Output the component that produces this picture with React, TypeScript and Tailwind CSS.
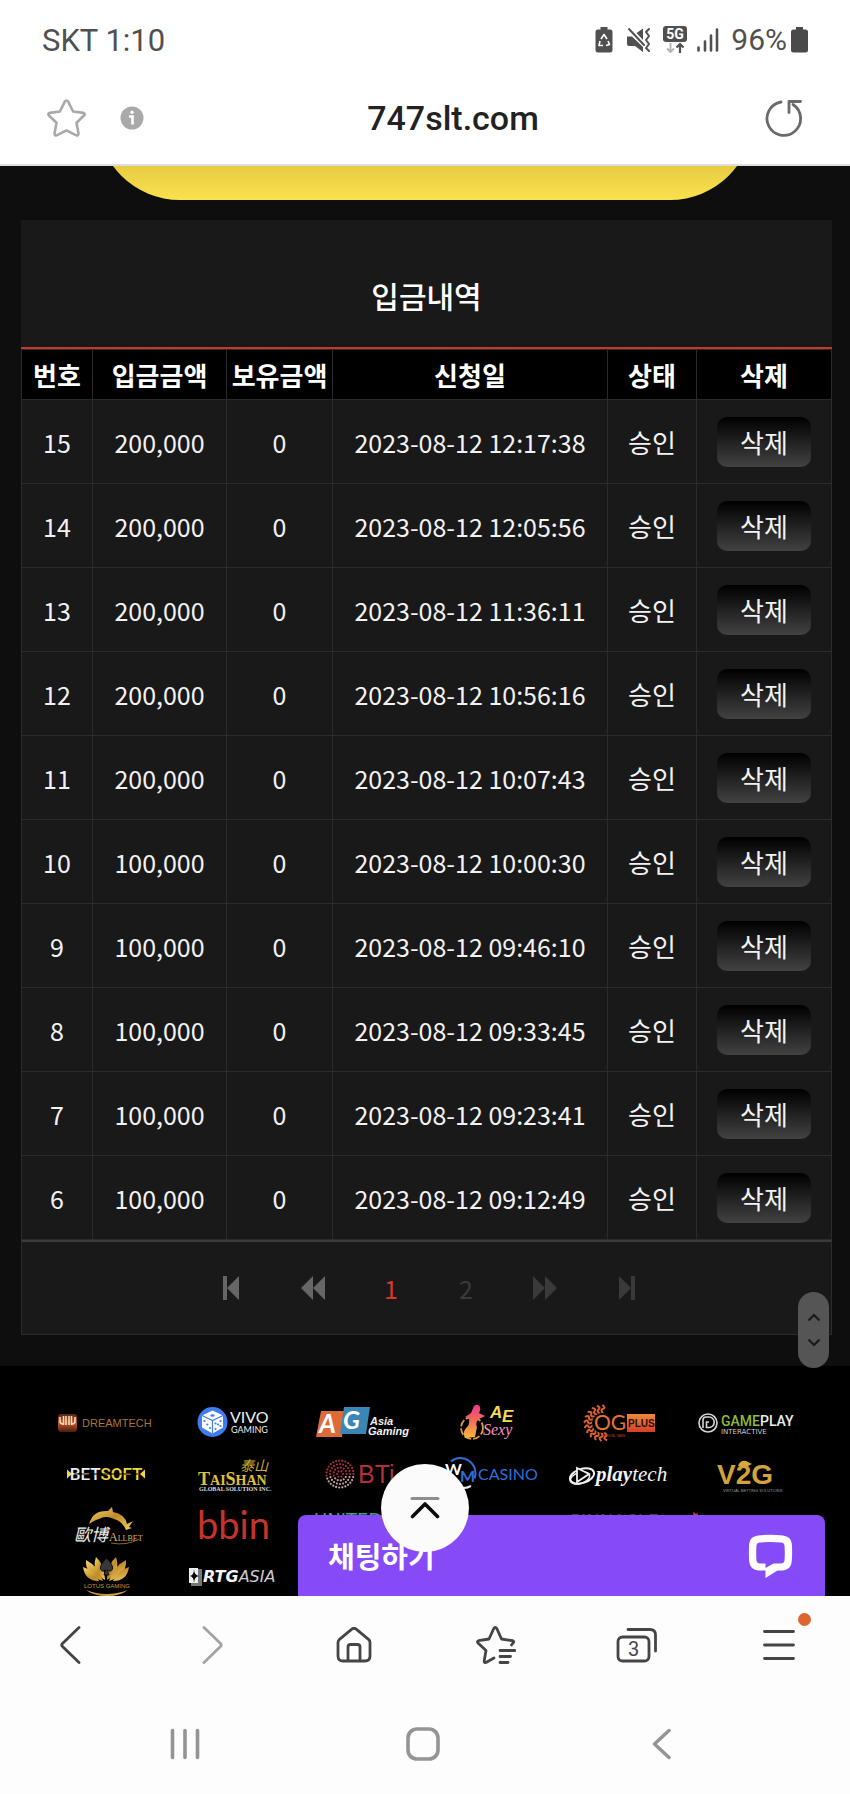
import React from "react";

type Deposito = {
  no: number;
  amount: string;
  balance: string;
  date: string;
};

const depositos: Deposito[] = [
  { no: 15, amount: "200,000", balance: "0", date: "2023-08-12 12:17:38" },
  { no: 14, amount: "200,000", balance: "0", date: "2023-08-12 12:05:56" },
  { no: 13, amount: "200,000", balance: "0", date: "2023-08-12 11:36:11" },
  { no: 12, amount: "200,000", balance: "0", date: "2023-08-12 10:56:16" },
  { no: 11, amount: "200,000", balance: "0", date: "2023-08-12 10:07:43" },
  { no: 10, amount: "100,000", balance: "0", date: "2023-08-12 10:00:30" },
  { no: 9, amount: "100,000", balance: "0", date: "2023-08-12 09:46:10" },
  { no: 8, amount: "100,000", balance: "0", date: "2023-08-12 09:33:45" },
  { no: 7, amount: "100,000", balance: "0", date: "2023-08-12 09:23:41" },
  { no: 6, amount: "100,000", balance: "0", date: "2023-08-12 09:12:49" },
];

const StatusBar: React.FC = () => (
  <div className="flex h-20 items-center justify-between px-[42px] text-[30px] leading-none text-[#505050]">
    <span className="text-[31px]">SKT 1:10</span>
    <div className="flex items-center">
      <svg width="18" height="26" viewBox="0 0 18 26" className="mr-3.5">
        <path d="M5.5 0h7v2.5H15a2.500 2.500 0 0 1 2.500 2.500v18a2.500 2.500 0 0 1-2.500 2.500H3A2.500 2.500 0 0 1 .5 23V5A2.500 2.500 0 0 1 3 2.500h2.500z" fill="#505050" />
        <path d="M6 12l3-4.500 3 4.500M13 14l1.500 3.500-3.500 1M8 18.500H4l1-4.500" fill="none" stroke="#fff" strokeWidth="1.600" strokeLinejoin="round" />
      </svg>
      <svg width="24" height="26" viewBox="0 0 24 26" className="mr-3">
        <path d="M0 9.500h5L16 20v5l-8-6H2a2 2 0 0 1-2-2zM9.500 6L16 1.500V13z" fill="#505050" />
        <path d="M2 2l15 16" stroke="#505050" strokeWidth="2" strokeLinecap="round" />
        <path d="M22 2l-3 3 3 4-3 4 3 4-3 4 3 3" fill="none" stroke="#505050" strokeWidth="2" strokeLinecap="round" strokeLinejoin="round" />
      </svg>
      <svg width="24" height="28" viewBox="0 0 24 28" className="mr-2.5">
        <rect width="24" height="16" rx="3" fill="#505050" />
        <text x="12" y="13" textAnchor="middle" fontSize="14" fontWeight="700" fill="#fff">5G</text>
        <path d="M7.500 17v9M4 22.500l3.500 3.500 3.500-3.500" fill="none" stroke="#b0b0b0" strokeWidth="1.800" />
        <path d="M17 27v-9M13.500 21.500L17 18l3.500 3.500" fill="none" stroke="#505050" strokeWidth="2.200" />
      </svg>
      <svg width="22" height="24" viewBox="0 0 22 24" className="mr-3">
        <path d="M1.500 19.500v3M8 13.500v9M14 7.500v15M20 1.500v21" stroke="#505050" strokeWidth="2.600" strokeLinecap="round" />
      </svg>
      <span>96%</span>
      <svg width="17" height="26" viewBox="0 0 17 26" className="ml-1">
        <path d="M5 0h7v2.500h2.500A2.500 2.500 0 0 1 17 5v18a2.500 2.500 0 0 1-2.500 2.500h-12A2.500 2.500 0 0 1 0 23V5a2.500 2.500 0 0 1 2.500-2.500H5z" fill="#4a4a4a" />
      </svg>
    </div>
  </div>
);

const AddressBar: React.FC = () => (
  <div className="flex h-[76px] items-center justify-between pl-[47px] pr-11">
    <div className="flex items-center gap-[34px]">
      <button type="button" aria-label="즐겨찾기">
        <svg width="39" height="39" viewBox="0 0 39 39" fill="none" stroke="#a9a9a9" strokeWidth="2.600" strokeLinejoin="round">
          <path d="M17.700 2.800q1.800-2.600 3.600 0l4.800 9.700 10.300 1.400q2 .8.900 2.300l-7.800 7.500 2 10.900q-.2 2.200-2.200 1.700l-9.800-5-9.800 5q-2 .5-2.200-1.700l2-10.900L1.700 16.200q-1.100-1.500.9-2.300l10.300-1.400z" />
        </svg>
      </button>
      <button type="button" aria-label="사이트 정보">
        <svg width="24" height="24" viewBox="0 0 24 24">
          <circle cx="12" cy="12" r="11.500" fill="#a9a9a9" />
          <circle cx="12" cy="6.200" r="1.700" fill="#fff" />
          <path d="M9 10.500h3.500v8" fill="none" stroke="#fff" strokeWidth="2.600" />
        </svg>
      </button>
    </div>
    <span className="text-[34px] font-medium leading-none text-[#222]">747slt.com</span>
    <button type="button" aria-label="새로고침" className="flex w-11 justify-center">
      <svg width="38" height="38" viewBox="0 0 38 38" fill="none" stroke="#6a6a6a" strokeWidth="2.800" strokeLinecap="round" strokeLinejoin="round">
        <path d="M16 3A16.800 16.800 0 1 0 28 5.500" />
        <path d="M35.500 2.500H24v11" />
      </svg>
    </button>
  </div>
);

const DepositTable: React.FC = () => (
  <table className="w-full table-fixed border-collapse text-center text-[25px] leading-8 text-[#f2f2f2]">
    <thead>
      <tr className="h-[50px] bg-black text-[26px] font-bold text-white">
        <th className="w-[71px] border border-[#2b2b2b]">번호</th>
        <th className="w-[134px] border border-[#2b2b2b]">입금금액</th>
        <th className="w-[106px] whitespace-nowrap border border-[#2b2b2b]">보유금액</th>
        <th className="border border-[#2b2b2b]">신청일</th>
        <th className="w-[89px] border border-[#2b2b2b]">상태</th>
        <th className="w-[135px] border border-[#2b2b2b]">삭제</th>
      </tr>
    </thead>
    <tbody>
      {depositos.map((item) => (
        <tr key={item.no} className="h-[84px]">
          <td className="border border-[#2b2b2b]">{item.no}</td>
          <td className="border border-[#2b2b2b]">{item.amount}</td>
          <td className="border border-[#2b2b2b]">{item.balance}</td>
          <td className="whitespace-nowrap border border-[#2b2b2b]">{item.date}</td>
          <td className="border border-[#2b2b2b] text-[26px]">승인</td>
          <td className="border border-[#2b2b2b] text-[26px]">
            <button
              type="button"
              className="h-[50px] w-[94px] rounded-[10px] bg-linear-to-b/srgb from-black to-[#424242] align-middle"
            >
              삭제
            </button>
          </td>
        </tr>
      ))}
    </tbody>
  </table>
);

const Pagination: React.FC = () => (
  <nav className="flex h-[95px] items-center justify-center border border-t-2 border-[#2b2b2b] border-t-[#3a3b3d] pl-1 text-[25px] leading-none">
    <button type="button" aria-label="처음" className="flex w-[82px] justify-center">
      <svg width="16" height="24" viewBox="0 0 16 24" fill="#666">
        <path d="M0 0h4v24H0zM16 0v24L4 12z" />
      </svg>
    </button>
    <button type="button" aria-label="이전" className="flex w-[82px] justify-center">
      <svg width="24" height="24" viewBox="0 0 24 24" fill="#666">
        <path d="M12 0v24L0 12zM24 0v24L12 12z" />
      </svg>
    </button>
    <button type="button" className="w-[75px] text-[#d33a2f]">1</button>
    <button type="button" className="w-[75px] text-[#3a3a3a]">2</button>
    <button type="button" aria-label="다음" className="flex w-[82px] justify-center">
      <svg width="24" height="24" viewBox="0 0 24 24" fill="#3a3a3a">
        <path d="M0 0v24l12-12zM12 0v24l12-12z" />
      </svg>
    </button>
    <button type="button" aria-label="마지막" className="flex w-[82px] justify-center">
      <svg width="16" height="24" viewBox="0 0 16 24" fill="#3a3a3a">
        <path d="M12 0h4v24h-4zM0 0v24l12-12z" />
      </svg>
    </button>
  </nav>
);

const Logo: React.FC<{ children?: React.ReactNode }> = ({ children }) => (
  <svg viewBox="0 0 128 51" className="w-full overflow-visible">
    {children}
  </svg>
);

// dot rings for the BTi mark: radius and number of dots
const rings = [
  [3, 6],
  [6.5, 13],
  [10, 20],
  [13.5, 27],
];

const rays = [80, 98, 116, 134, 152, 170, 188, 206, 224, 242, 260, 278];

const Partners: React.FC = () => (
  <footer className="bg-black px-[41px] pt-[31px]">
    <svg width="0" height="0" className="absolute">
      <defs>
        <linearGradient id="gold" x1="0" y1="0" x2="1" y2="1">
          <stop offset="0" stopColor="#f3d768" />
          <stop offset="0.500" stopColor="#c08a2a" />
          <stop offset="1" stopColor="#f0cf60" />
        </linearGradient>
        <linearGradient id="copper" x1="0" y1="0" x2="0" y2="1">
          <stop offset="0" stopColor="#5a2412" />
          <stop offset="0.500" stopColor="#c4562a" />
          <stop offset="1" stopColor="#4a1c10" />
        </linearGradient>
        <linearGradient id="sunset" x1="0" y1="0" x2="0" y2="1">
          <stop offset="0" stopColor="#f0358f" />
          <stop offset="0.450" stopColor="#f46a5a" />
          <stop offset="1" stopColor="#f6b93c" />
        </linearGradient>
        <linearGradient id="ember" x1="0" y1="0" x2="0" y2="1">
          <stop offset="0" stopColor="#ee8a35" />
          <stop offset="1" stopColor="#d4402c" />
        </linearGradient>
      </defs>
    </svg>
    <div className="grid grid-cols-6">
      <Logo>
        <rect x="17" y="17" width="19" height="18" rx="3" fill="url(#copper)" />
        <path d="M19 20v4q0 3 3 3M22.500 19v9M25 19v9M28 19v9M30.500 19v9M34 20v4q0 3-3 3" fill="none" stroke="#fbe3c0" strokeWidth="1.500" />
        <text x="41" y="30" fontFamily="Liberation Sans" fontSize="11" fill="#a8743c">DREAMTECH</text>
      </Logo>
      <Logo>
        <circle cx="43.500" cy="25" r="15" fill="#3f7cf0" />
        <path d="M43.500 13.500l10.500 5v12l-10.500 6-10.500-6v-12z" fill="#fff" />
        <path d="M33 18.500l10.500 5 10.500-5M43.500 23.500v13" fill="none" stroke="#3f7cf0" strokeWidth="1.200" />
        <g fill="#3f7cf0">
          <ellipse cx="43.500" cy="18.500" rx="2.200" ry="1.200" />
          <circle cx="35.500" cy="24" r="1.100" />
          <circle cx="38.300" cy="27.500" r="1.100" />
          <circle cx="41" cy="31" r="1.100" />
          <circle cx="46.500" cy="26.500" r="1.100" />
          <circle cx="51.500" cy="24" r="1.100" />
          <circle cx="49" cy="27.500" r="1.100" />
          <circle cx="46.500" cy="32" r="1.100" />
          <circle cx="51.500" cy="29" r="1.100" />
        </g>
        <text fontFamily="Lato" fontSize="16" fill="#eee">
          <tspan x="61" y="26">VIVO</tspan>
          <tspan x="62" y="36" fontSize="9">GAMING</tspan>
        </text>
      </Logo>
      <Logo>
        <path d="M24 14h24l-3 26H19z" fill="#de6a38" />
        <path d="M47 10h26l-4 27H43z" fill="#3a87b5" />
        <text x="22" y="36" fontFamily="Lato" fontSize="26" fontWeight="700" fontStyle="italic" fill="#fff">
          A<tspan x="46" y="32" fontSize="25">G</tspan>
        </text>
        <text fontFamily="Liberation Sans" fontSize="11" fontWeight="700" fontStyle="italic" fill="#f2f2f2">
          <tspan x="73" y="28">Asia</tspan>
          <tspan x="71" y="38">Gaming</tspan>
        </text>
      </Logo>
      <Logo>
        <circle cx="47" cy="31" r="11" fill="none" stroke="#dc9a35" strokeWidth="1.800" strokeDasharray="7 2" />
        <path d="M49 9q4-3 6 1 1 3-1 6l6 3-6 3q-4 3-2 8l-2 10-10 1q-3-7 2-11 3-3 2-8l-4-2 6-4z" fill="url(#sunset)" />
        <text fontFamily="Liberation Sans" fontSize="17" fontWeight="700" fontStyle="italic" fill="#f5da55">
          <tspan x="65" y="21">A</tspan>
          <tspan x="77" y="25">E</tspan>
          <tspan x="58" y="38" fontFamily="Liberation Serif" fontSize="16" fontWeight="400" fill="#f397c4">Sexy</tspan>
        </text>
      </Logo>
      <Logo>
        {rays.map((a) => (
          <path key={a} d="M58 26q4-4 5-1t4-1" transform={`rotate(${a} 49 26)`} fill="none" stroke="#dd6030" strokeWidth="2" />
        ))}
        <circle cx="49" cy="26" r="10" fill="#000" />
        <text x="41" y="33" fontFamily="Lato" fontSize="21" fill="#e8742f">OG</text>
        <rect x="74" y="17" width="28" height="18" fill="url(#ember)" />
        <text x="75" y="30" fontFamily="Liberation Sans" fontSize="10" fontWeight="700" fill="#2a0f08">PLUS</text>
        <text x="48" y="40" fontFamily="Liberation Sans" fontSize="3" fill="#c23a28">ORIENTAL GAME</text>
      </Logo>
      <Logo>
        <circle cx="27" cy="26" r="9" fill="none" stroke="#d6d6d6" strokeWidth="1.600" />
        <path d="M22 31v-8a3 3 0 0 1 3-3h3a5 5 0 0 1 0 10.500h-2.500V25h2.500" fill="none" stroke="#d6d6d6" strokeWidth="1.600" />
        <text x="40" y="29" fontFamily="Roboto" fontSize="14" fontWeight="500" fill="#8fb93a">
          GAME<tspan fill="#ececec">PLAY</tspan>
          <tspan x="40" y="37" fontFamily="DejaVu Sans" fontSize="7" fontWeight="400" fill="#ccc">INTERACTIVE</tspan>
        </text>
      </Logo>

      <Logo>
        <path d="M26 21.500l5 4.500-5 4.500zM104 21.500L99 26l5 4.500z" fill="#ecd93c" />
        <text x="65" y="32" textAnchor="middle" fontFamily="Roboto" fontSize="17" fontWeight="500" fill="#ececec">BET<tspan fill="#ecd93c">SOFT</tspan></text>
        <path d="M33 26h64" stroke="#000" strokeWidth="1" />
      </Logo>
      <Logo>
        <text x="29" y="37" fontFamily="Liberation Serif" fontSize="18" fontWeight="700" fill="#e0c23a">
          T<tspan fontSize="14">AI</tspan>S<tspan fontSize="14">HAN</tspan>
          <tspan x="71" y="23" fontFamily="Noto Sans CJK TC" fontSize="14" fontWeight="400" fontStyle="italic" fill="#cfae2e">泰山</tspan>
          <tspan x="30" y="43" fontSize="6" fill="#ddd">GLOBAL SOLUTION INC.</tspan>
        </text>
      </Logo>
      <Logo>
        {rings.map(([r, n]) =>
          Array.from({ length: n }, (_, i) => {
            const a = (i / n) * Math.PI * 2;
            const y = 26 + r * Math.sin(a);
            return (
              <circle key={`${r}-${i}`} cx={43 + r * Math.cos(a)} cy={y} r="1.100" fill={y > 29 ? "#c9a2a6" : "#a5303c"} />
            );
          })
        )}
        <text x="61" y="35" fontFamily="Liberation Sans" fontSize="25" fill="#b2303a">BTi</text>
      </Logo>
      <Logo>
        <path d="M26 13.500a15 15 0 0 1 23.500 17" fill="none" stroke="#2f70d8" strokeWidth="2" />
        <path d="M26 36q10 7 20 2" fill="none" stroke="#e8e8e8" strokeWidth="2" />
        <text x="20" y="27" fontFamily="Lato" fontSize="16" fontWeight="700" fill="#fff">
          W<tspan x="35" y="34" fill="#2f70d8">M</tspan>
          <tspan x="53" y="32" fontWeight="400" fill="#2f70d8">CASINO</tspan>
        </text>
      </Logo>
      <Logo>
        <ellipse cx="29" cy="28" rx="12.500" ry="7" transform="rotate(-18 29 28)" fill="none" stroke="#f0f0f0" strokeWidth="2" />
        <ellipse cx="27" cy="30" rx="10" ry="5.500" transform="rotate(-18 27 30)" fill="none" stroke="#f0f0f0" strokeWidth="1.500" />
        <path d="M24 20l12 6-12 8z" fill="#000" stroke="#f0f0f0" strokeWidth="1.800" />
        <text x="43" y="33" fontFamily="Liberation Serif" fontSize="21" fontStyle="italic" fontWeight="700" fill="#f4f4f4">
          play<tspan fontWeight="400">tech</tspan>
        </text>
      </Logo>
      <Logo>
        <text x="36" y="36" fontFamily="Liberation Sans" fontSize="28" fontWeight="700" fill="#d3a23a">
          V2G
          <tspan x="42" y="44" fontSize="4" fontWeight="400" fill="#999">VIRTUAL BETTING SOLUTIONS</tspan>
        </text>
        <path d="M57 18q2-6 8-5l6 3-4 2z" fill="#d9a83a" />
      </Logo>

      <Logo>
        <path d="M48 25q4-14 19-13l4-4 1 5q12 2 14 12l6-3-4 6 3 1-6 2q-4-9-12-11-8-4-15 0-4 1-10 5z" fill="url(#gold)" />
        <text x="33" y="42" fontFamily="Noto Sans CJK TC" fontSize="17" fontStyle="italic" fill="#eee">
          歐博
          <tspan x="68" y="42" fontFamily="Liberation Serif" fontSize="12" fontStyle="normal" fill="#d6b66a">A</tspan>
          <tspan fontFamily="Liberation Serif" fontSize="8" fontStyle="normal" fill="#d6b66a">LLBET</tspan>
        </text>
        <path d="M70 44q16 3 28-4" fill="none" stroke="#8a6a30" strokeWidth="1" />
      </Logo>
      <Logo>
        <text x="28" y="40" fontFamily="Lato" fontSize="38" fill="#c5332c">bbin</text>
      </Logo>
      <Logo>
        <text x="17" y="27" fontFamily="DejaVu Sans" fontSize="18" fill="#3fa08f">UNITED</text>
      </Logo>
      <Logo />
      <Logo>
        <text x="17" y="28" fontFamily="DejaVu Sans" fontSize="18" fill="#444">PINNACLE</text>
      </Logo>
      <Logo>
        <path d="M12 13l3 2 2-1-1 6h-3z" fill="#c5462c" />
      </Logo>

      <Logo>
        <g fill="url(#gold)">
          <path d="M64 30Q50 22 55 7q9 8 9 23z" />
          <path d="M66 30q14-8 9-23-9 8-9 23z" />
          <path d="M62 31Q44 26 45 10q12 6 17 21zM68 31q18-5 17-21-12 6-17 21z" />
          <path d="M58 31q-14 0-16-14 10 3 16 14zM72 31q14 0 16-14-10 3-16 14z" />
          <path d="M45 40q20 8 42 0-8 6-21 6t-21-6z" />
        </g>
        <path d="M65.500 8q7 7 6 11-2 4-5 1l1.500 5h-5l1.500-5q-3 3-5-1-1-4 6-11z" fill="#38383c" stroke="#000" strokeWidth="0.800" />
        <text x="43" y="38" fontFamily="Liberation Sans" fontSize="6" fill="#c99a3c">LOTUS GAMING</text>
      </Logo>
      <Logo>
        <rect x="22" y="19" width="11" height="17" fill="#777" />
        <rect x="20" y="18" width="9" height="15" fill="#eee" />
        <path d="M25 19q0 6 5 7-5 1-5 7 0-6-4-7 4-1 4-7z" fill="#000" />
        <text x="34" y="32" fontFamily="DejaVu Sans" fontSize="16" fontWeight="700" fontStyle="italic" fill="#f4f4f4">
          RTG<tspan fontWeight="400" fill="#ccc">ASIA</tspan>
        </text>
      </Logo>
    </div>
  </footer>
);

const Overlays: React.FC = () => (
  <>
    <div className="absolute bottom-[228px] right-[21px] flex h-[76px] w-[31px] flex-col items-center justify-center gap-4 rounded-full bg-[#555]">
      <svg width="14" height="9" viewBox="0 0 14 9" fill="none" stroke="#1a1a1a" strokeWidth="2.200">
        <path d="M1.500 7.500L7 2l5.500 5.500" />
      </svg>
      <svg width="14" height="9" viewBox="0 0 14 9" fill="none" stroke="#1a1a1a" strokeWidth="2.200">
        <path d="M1.500 1.500L7 7l5.500-5.500" />
      </svg>
    </div>
    <button
      type="button"
      className="absolute bottom-0 right-[25px] flex h-[81px] w-[62%] items-center justify-between rounded-t-lg bg-[#864bf6] pl-[30px] pr-8 text-[29px] font-bold text-white"
    >
      <span>채팅하기</span>
      <svg width="45" height="44" viewBox="0 0 45 44">
        <path
          fillRule="evenodd"
          d="M10 1.500q12.500-1.500 25 0 8 1 8.800 8 .7 9 0 18-.8 8-8.800 9h-5.500L17.500 44v-7.500H10q-8-1-8.800-9-.7-9 0-18 .8-7 8.800-8zM12 8.500q-3 0-3.500 3-.6 7.500 0 15 .5 3 3.500 3h5.500V34l8-4.500H33q3 0 3.500-3 .6-7.500 0-15-.5-3-3.500-3-10.500-1-21 0z"
          fill="#fff"
        />
      </svg>
    </button>
    <button
      type="button"
      aria-label="맨 위로"
      className="absolute bottom-11 left-1/2 flex size-[88px] -translate-x-1/2 items-center justify-center rounded-full bg-[#fbfbfb]"
    >
      <svg width="30" height="24" viewBox="0 0 30 24" fill="none" strokeLinecap="round" strokeLinejoin="round">
        <path d="M2 2.500h26" stroke="#8e8e8e" strokeWidth="3" />
        <path d="M2.500 20.500L15 8l12.500 12.500" stroke="#0a0a0a" strokeWidth="3.600" />
      </svg>
    </button>
  </>
);

const BrowserToolbar: React.FC = () => (
  <div className="grid h-[98px] grid-cols-6 place-items-center">
    <button type="button" aria-label="뒤로">
      <svg width="22" height="40" viewBox="0 0 22 40" fill="none" stroke="#444" strokeWidth="2.800" strokeLinecap="round" strokeLinejoin="round">
        <path d="M19 2.500L2.500 18.500q-1.500 1.500 0 3L19 37.500" />
      </svg>
    </button>
    <button type="button" aria-label="앞으로">
      <svg width="22" height="40" viewBox="0 0 22 40" fill="none" stroke="#a3a3a3" strokeWidth="2.800" strokeLinecap="round" strokeLinejoin="round">
        <path d="M3 2.500l16.500 16q1.500 1.500 0 3L3 37.500" />
      </svg>
    </button>
    <button type="button" aria-label="홈">
      <svg width="36" height="36" viewBox="0 0 36 36" fill="none" stroke="#454545" strokeWidth="2.800" strokeLinejoin="round">
        <path d="M2 15.500q0-2 1.500-3.200l12-10q2.500-1.800 5 0l12 10Q34 13.500 34 15.500V29q0 5-5 5H7q-5 0-5-5z" />
        <path d="M12 34V20q0-2.500 2.500-2.500h7Q24 17.500 24 20v14" />
      </svg>
    </button>
    <button type="button" aria-label="북마크">
      <svg width="40" height="40" viewBox="0 0 40 40" fill="none" stroke="#454545" strokeWidth="2.800" strokeLinecap="round" strokeLinejoin="round">
        <path d="M18 33l-8 4.500q-1.800.5-1.800-1.500L10 25.500 2 18q-1.200-1.500.6-2.300L13 14l4.800-10.500q1.500-2.300 3 0L25.500 14l11 1.700q2 .6.800 2L35.500 20" />
        <path d="M24 25.500h15M24 31.500h10.500M24 37.500h8" />
      </svg>
    </button>
    <button type="button" aria-label="탭">
      <svg width="42" height="36" viewBox="0 0 42 36" fill="none" stroke="#454545" strokeWidth="2.800" strokeLinecap="round">
        <rect x="2" y="10" width="31" height="24" rx="4.500" />
        <path d="M12 2.500h22q5.500 0 5.500 5.500v16" />
        <text x="17.500" y="29" textAnchor="middle" fontSize="20" fill="#454545" stroke="none">3</text>
      </svg>
    </button>
    <button type="button" aria-label="메뉴" className="relative">
      <svg width="32" height="32" viewBox="0 0 32 32" stroke="#454545" strokeWidth="2.800" strokeLinecap="round">
        <path d="M1.500 2.500h29M1.500 16h29M1.500 29.500h29" />
      </svg>
      <span className="absolute -right-4 -top-4 size-[13px] rounded-full bg-[#dc662f]" />
    </button>
  </div>
);

const SystemNav: React.FC = () => (
  <div className="grid h-[100px] grid-cols-3 place-items-center pl-[66px] pr-[70px]">
    <button type="button" aria-label="최근 앱">
      <svg width="30" height="32" viewBox="0 0 30 32" stroke="#949494" strokeWidth="3.600" strokeLinecap="round">
        <path d="M2.500 2.500v27M15 2.500v27M27.500 2.500v27" />
      </svg>
    </button>
    <button type="button" aria-label="홈 화면">
      <svg width="34" height="34" viewBox="0 0 34 34" fill="none" stroke="#949494" strokeWidth="3.600">
        <rect x="2" y="2" width="30" height="30" rx="9" />
      </svg>
    </button>
    <button type="button" aria-label="이전 화면">
      <svg width="19" height="32" viewBox="0 0 19 32" fill="none" stroke="#949494" strokeWidth="3.400" strokeLinecap="round" strokeLinejoin="round">
        <path d="M17 2.500L2.500 16 17 29.500" />
      </svg>
    </button>
  </div>
);

const App: React.FC = () => {
  return (
    <div className="flex h-screen flex-col bg-white font-['Roboto','Noto_Sans_CJK_KR',sans-serif]">
      <header className="border-b-2 border-[#dedede] pb-2">
        <StatusBar />
        <AddressBar />
      </header>
      <div className="relative min-h-0 flex-1 overflow-hidden bg-[#0e0e0e] font-['Noto_Sans_CJK_KR',sans-serif]">
        <div className="mx-[97px] flex h-[34px] items-end overflow-hidden">
          <div className="h-[166px] w-full shrink-0 rounded-full bg-linear-to-b from-[#cbac35] from-50% to-[#fae24d]" />
        </div>
        <main className="pb-[31px] pl-[21px] pr-[18px] pt-5">
          <section className="bg-[#191919]">
            <h1 className="flex h-[129px] items-center justify-center border-b-2 border-[#c8362c] pt-6 text-[30px] font-medium text-white">
              입금내역
            </h1>
            <DepositTable />
            <Pagination />
          </section>
        </main>
        <Partners />
        <Overlays />
      </div>
      <div className="bg-[#fdfdfd]">
        <BrowserToolbar />
        <SystemNav />
      </div>
    </div>
  );
};

export default App;
